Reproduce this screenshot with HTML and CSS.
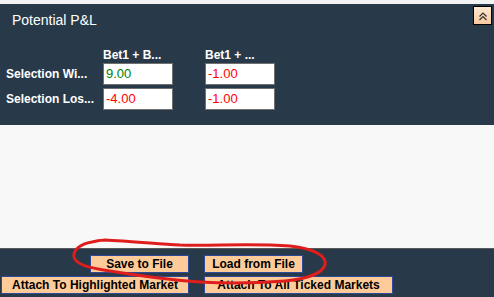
FILE: index.html
```html
<!DOCTYPE html>
<html>
<head>
<meta charset="utf-8">
<link rel="stylesheet" href="styles.css">
</head>
<body>
<div class="page">
  <div class="topstrip"></div>
  <section class="pnl">
    <div class="pnl-head">
      <span class="title">Potential P&amp;L</span>
      <button class="collapse" aria-label="Collapse">
        <svg width="12" height="12" viewBox="0 0 12 12"><path d="M2.5 6.5 L6 3 L9.5 6.5 M2.5 10 L6 6.5 L9.5 10" fill="none" stroke="#333" stroke-width="1.2"/></svg>
      </button>
    </div>
    <div class="grid">
      <span></span>
      <span class="colhead">Bet1 + B...</span>
      <span class="colhead">Bet1 + ...</span>
      <span class="rowlabel">Selection Wi...</span>
      <span class="cell pos">9.00</span>
      <span class="cell neg">-1.00</span>
      <span class="rowlabel">Selection Los...</span>
      <span class="cell neg">-4.00</span>
      <span class="cell neg">-1.00</span>
    </div>
  </section>
  <div class="empty"></div>
  <footer class="actions">
    <button class="btn small">Save to File</button>
    <button class="btn small">Load from File</button>
    <button class="btn wide1">Attach To Highlighted Market</button>
    <button class="btn wide2">Attach To All Ticked Markets</button>
  </footer>
  <svg class="scribble" width="494" height="297" viewBox="0 0 494 297">
    <path d="M105 240 C125 241 150 243 180 245 C215 246 250 243 290 246 C315 249 327 256 325 265 C322 273 308 279 285 281 C260 283 230 284 200 282 C170 280 140 276 110 271 C90 268 76 265 74 257 C73 250 80 244 92 242 C97 241 101 240 105 240" fill="none" stroke="#e01d1d" stroke-width="3" stroke-linecap="round"/>
  </svg>
</div>
</body>
</html>
```
FILE: styles.css
```css
* { box-sizing: border-box; }
html, body { margin: 0; padding: 0; }
body {
  width: 494px;
  height: 297px;
  overflow: hidden;
  background: #f8f8f8;
  font-family: "Liberation Sans", Arial, sans-serif;
}
.page {
  position: relative;
  width: 494px;
  height: 297px;
  display: flex;
  flex-direction: column;
}
.topstrip {
  height: 4px;
  background: #f3f3f3;
}
.pnl {
  height: 121px;
  background: #283a4a;
  color: #fff;
}
.pnl-head {
  display: flex;
  justify-content: space-between;
  align-items: flex-start;
  padding: 2px 2px 0 12px;
  height: 36px;
}
.title {
  font-size: 14px;
  line-height: 16px;
  margin-top: 6px;
}
.collapse {
  width: 19px;
  height: 19px;
  padding: 0;
  border: 1px solid #000;
  background: linear-gradient(to bottom, #ffe8d0, #f9c9a0);
  display: flex;
  align-items: center;
  justify-content: center;
}
.grid {
  display: grid;
  grid-template-columns: 65px 70px 70px;
  column-gap: 32px;
  row-gap: 3px;
  padding-left: 6px;
  align-items: center;
  margin-top: 8px;
}
.colhead {
  font-size: 12px;
  font-weight: bold;
  line-height: 14px;
  height: 13px;
  margin-bottom: -1px;
}
.rowlabel {
  font-size: 12px;
  font-weight: bold;
  white-space: nowrap;
}
.cell {
  height: 22px;
  background: #fff;
  border: 1px solid #707070;
  font-size: 13px;
  line-height: 20px;
  padding-left: 2px;
}
.pos { color: #008000; }
.neg { color: #ff0000; }
.empty {
  flex: 1;
  background: #f8f8f8;
  border-bottom: 1px solid #5a5a5a;
}
.actions {
  height: 48px;
  background: #283a4a;
  display: grid;
  grid-template-columns: 189px 1fr;
  column-gap: 15px;
  row-gap: 3px;
  padding-top: 6px;
  align-content: start;
}
.btn {
  height: 18px;
  padding: 0;
  background: #ffcc99;
  border: 1px solid #2d4a9a;
  border-radius: 1px;
  font-family: "Liberation Sans", Arial, sans-serif;
  font-size: 12px;
  font-weight: bold;
  color: #000;
  line-height: 16px;
}
.small { width: 99px; }
.actions .small:first-child { justify-self: end; }
.wide1 { width: 188px; justify-self: end; }
.wide2 { width: 189px; justify-self: start; }
.scribble {
  position: absolute;
  left: 0;
  top: 0;
  pointer-events: none;
}
```
